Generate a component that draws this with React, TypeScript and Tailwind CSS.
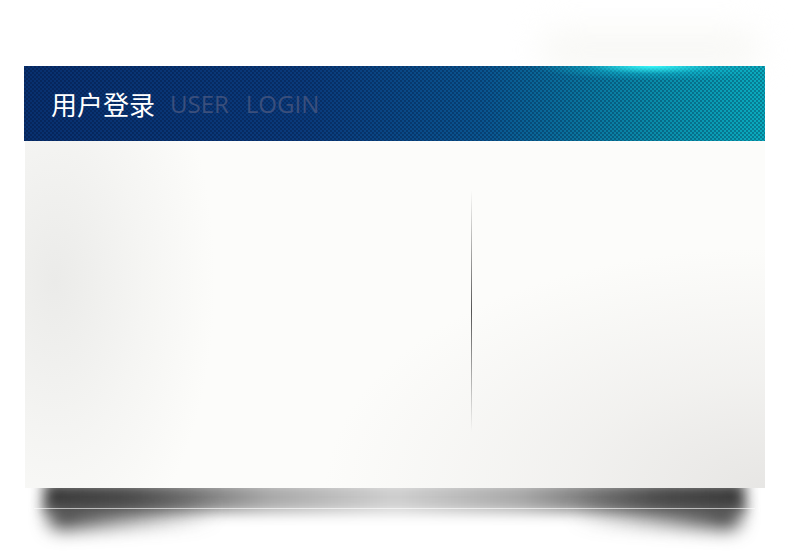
import React from "react";

const LoginPanel: React.FC = () => {
  return (
    <div className="relative w-[741px]">
      {/* header bar */}
      <div className="relative h-[75px] overflow-hidden bg-[linear-gradient(to_right,#08306f_0%,#0a3a7b_38%,#0a5590_62%,#0a8aa9_84%,#0aabbe_100%)]">
        <div className="absolute inset-0 bg-[repeating-conic-gradient(rgba(0,10,40,0.28)_0_25%,transparent_0_50%)] bg-[length:4px_4px]" />
        <div className="absolute inset-0 bg-[radial-gradient(ellipse_120px_14px_at_628px_0px,rgba(60,255,255,0.95),rgba(20,220,240,0.3)_55%,transparent_100%)]" />
        <div className="relative flex h-full items-center pl-[27px]">
          <span className="font-['Noto_Sans_CJK_SC',sans-serif] text-[26px] leading-none text-white">
            用户登录
          </span>
          <div className="ml-[15px] flex gap-[17px] font-['Open_Sans',sans-serif] text-[24px] leading-none text-[#3b4f7c]">
            <span>USER</span>
            <span>LOGIN</span>
          </div>
        </div>
      </div>

      {/* body */}
      <div className="relative z-10 ml-px h-[347px] bg-[#fcfcfa]">
        <div className="absolute inset-0 bg-[radial-gradient(ellipse_160px_300px_at_30px_140px,#ebebe9,rgba(238,238,236,0.5)_55%,transparent_100%)]" />
        <div className="absolute inset-0 bg-[radial-gradient(ellipse_440px_240px_at_100%_100%,#e7e6e4,rgba(235,234,232,0.6)_45%,transparent_100%)]" />
        <div className="relative flex pl-[446px] pt-[49px]">
          <div className="h-[242px] w-px bg-[linear-gradient(to_bottom,rgba(80,80,80,0),#555_50%,rgba(80,80,80,0))]" />
        </div>
      </div>

      {/* floor shadow */}
      <div className="relative h-[50px]">
        <div className="absolute left-[20px] right-[20px] -top-[6px] h-[30px] blur-[7px] bg-[linear-gradient(to_right,#3a3a3a_0%,#4e4e4e_12%,#a8a8a8_32%,#cfcfcf_50%,#a8a8a8_68%,#4e4e4e_88%,#3a3a3a_100%)]" />
        <div className="absolute left-[24px] top-[12px] h-[26px] w-[170px] -rotate-[3deg] rounded-full blur-[9px] bg-[linear-gradient(to_right,#3a3a3a,rgba(90,90,90,0))]" />
        <div className="absolute right-[24px] top-[12px] h-[26px] w-[170px] rotate-[3deg] rounded-full blur-[9px] bg-[linear-gradient(to_left,#3a3a3a,rgba(90,90,90,0))]" />
        <div className="absolute left-[10px] right-[10px] top-[20px] h-px bg-white/60" />
      </div>
    </div>
  );
};

export default function App() {
  return (
    <div className="relative h-[551px] w-[812px] overflow-hidden bg-white pl-[24px] pt-[66px]">
      <div className="absolute left-[540px] top-[30px] h-[40px] w-[220px] rounded-full bg-[#f8f8f5] blur-[16px]" />
      <LoginPanel />
    </div>
  );
}
